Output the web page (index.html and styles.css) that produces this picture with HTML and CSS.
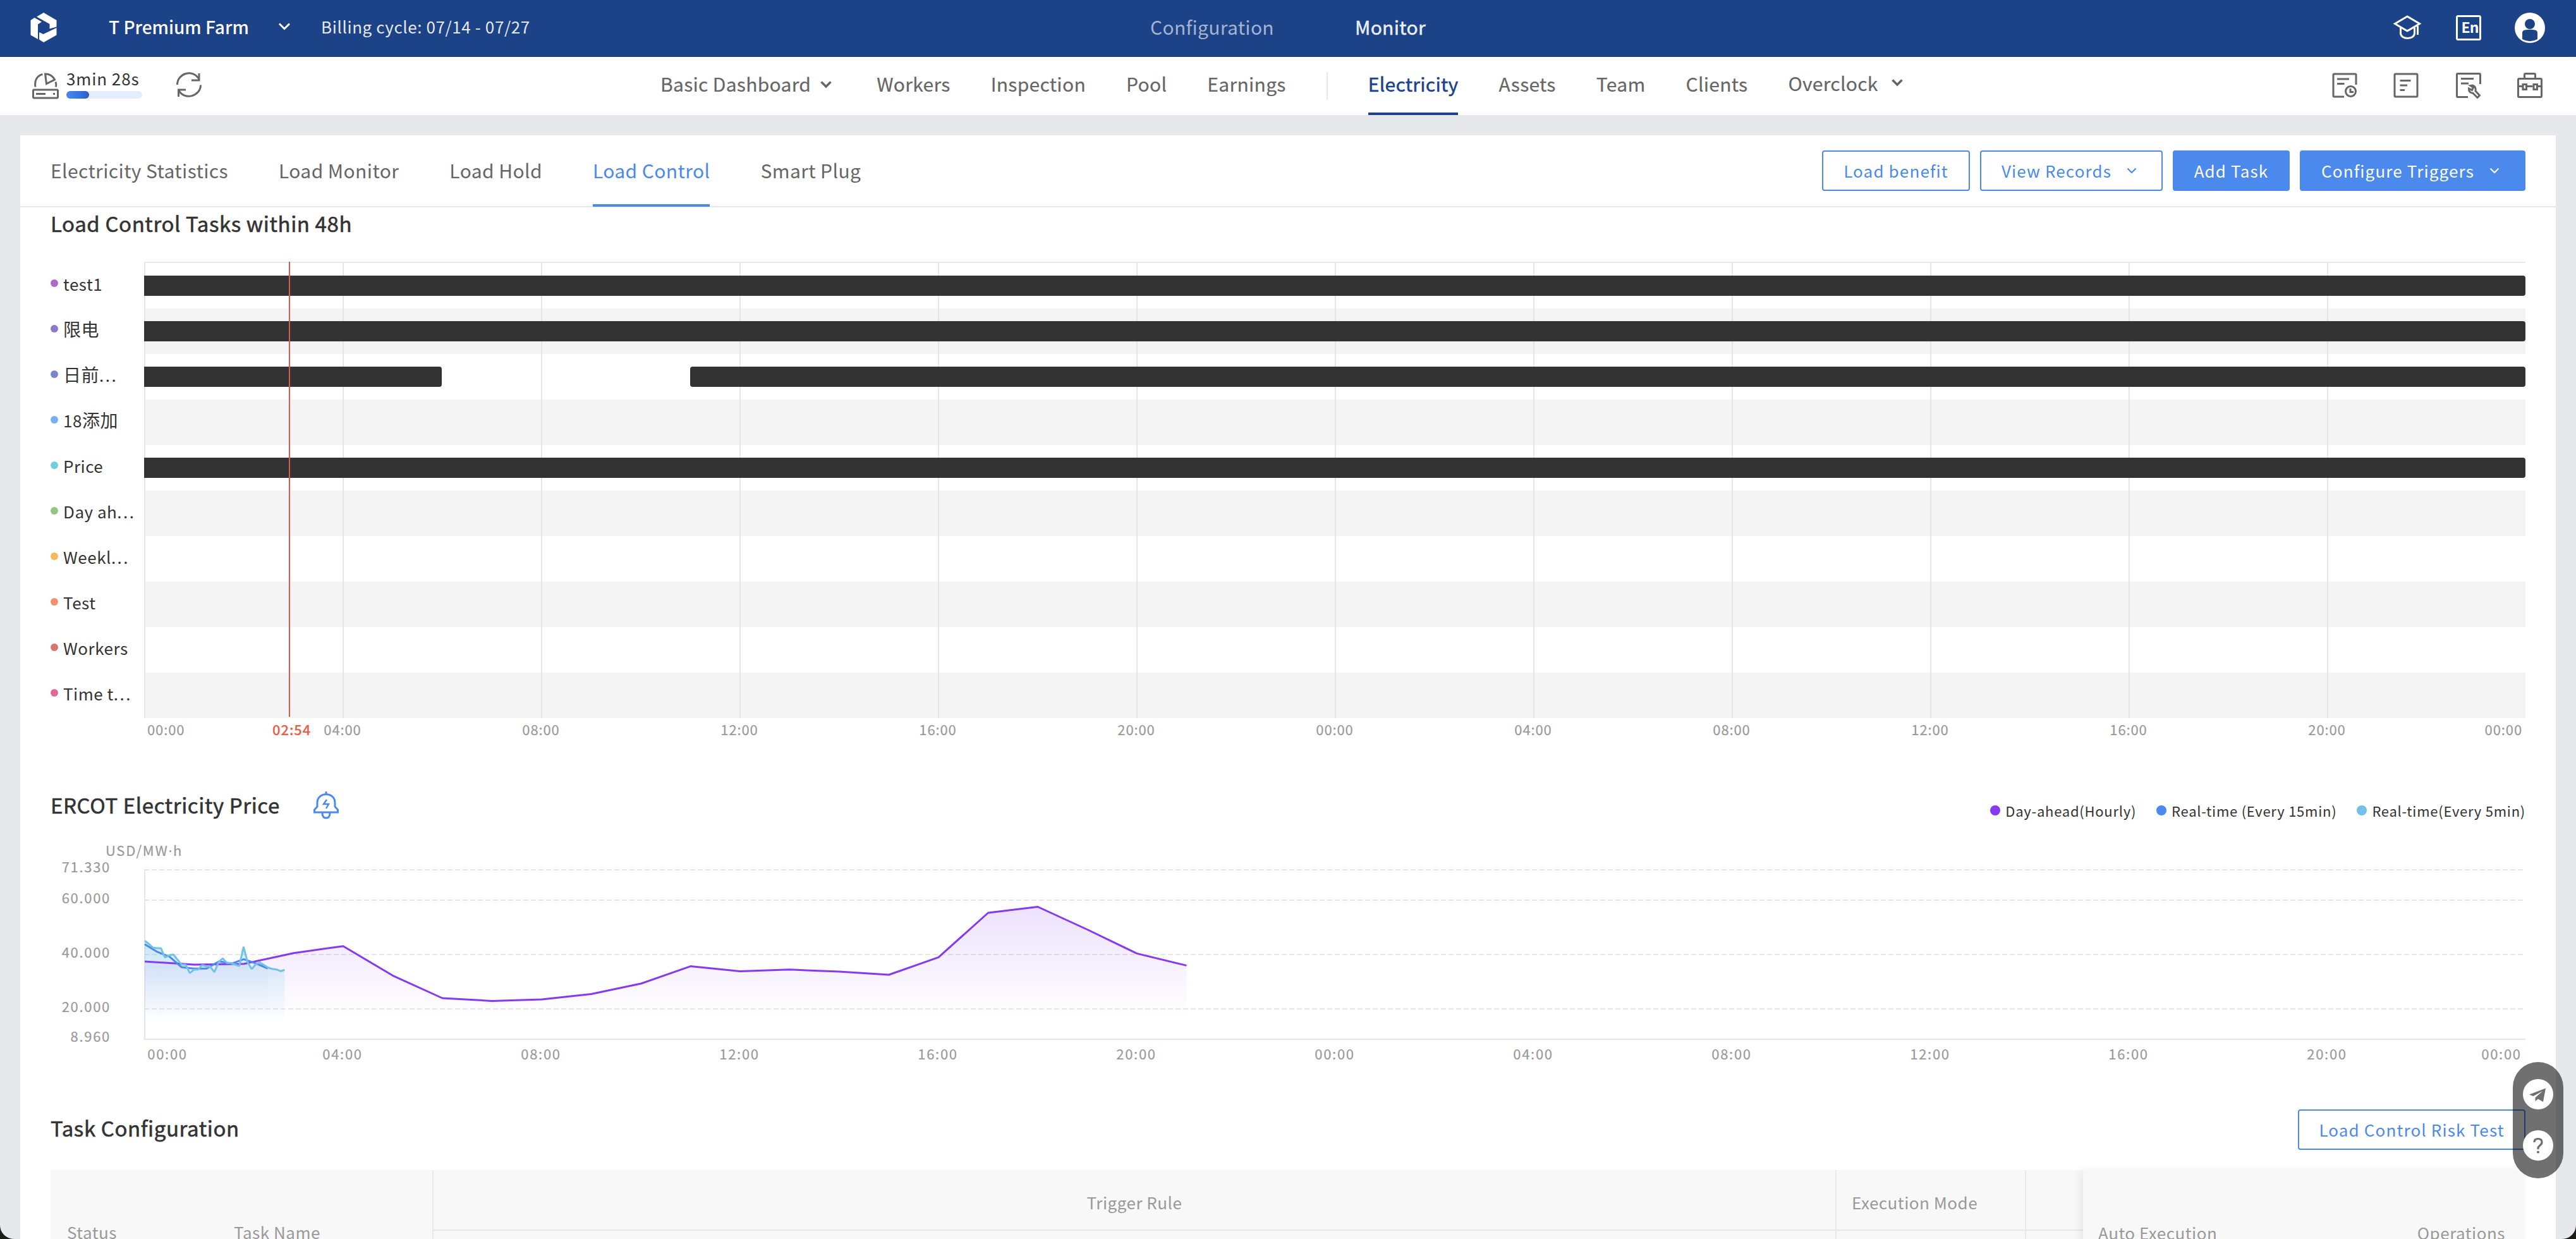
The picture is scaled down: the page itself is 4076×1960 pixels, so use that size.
FILE: index.html
```html
<!DOCTYPE html>
<html lang="en">
<head>
    <meta charset="UTF-8">
    <meta name="viewport" content="width=device-width, initial-scale=1.0">
    <title>Load Control</title>
    <link rel="stylesheet" href="styles.css">
</head>
<body>
<div class="page">
    <header class="topbar">
        <svg class="logo" width="42" height="48" viewBox="0 0 42 48">
            <path fill="#fff" d="M10 6.500 21 0 41.500 12v10.500L30.500 25.500V18zM6.500 8 18 14.500 12 18.500V42L0.500 35.500V12zM41.500 24v11.500L21 47 14 42.500V31l6.500 3z"/>
        </svg>
        <span class="farm">T Premium Farm</span>
        <svg class="farm-arrow" width="20" height="12" viewBox="0 0 20 12"><path d="M2 1.500 10 9.500 18 1.500"/></svg>
        <span class="billing">Billing cycle: 07/14 - 07/27</span>
        <nav class="modes">
            <a>Configuration</a>
            <a class="on">Monitor</a>
        </nav>
        <div class="icons top-icons">
            <svg width="48" height="48" viewBox="0 0 48 48">
                <path d="M4.500 17.500 24 6l19.500 11.500L24 29zM13.500 23.500v9C13.500 43 35.500 43 35.500 32.500v-9M40.500 21v14"/>
            </svg>
            <svg width="48" height="48" viewBox="0 0 48 48">
                <rect x="5.500" y="5.500" width="37" height="37" rx="2"/>
                <text x="12.500" y="32" class="en">En</text>
            </svg>
            <svg width="48" height="48" viewBox="0 0 48 48">
                <circle cx="24" cy="24" r="24" fill="#fff" stroke="none"/>
                <circle cx="24" cy="18" r="8" fill="#1c4287" stroke="none"/>
                <path fill="#1c4287" stroke="none" d="M12 42V32q0-4 4-4.500 8-1.500 16 0 4 .5 4 4.500v10q-12 6.500-24 0z"/>
            </svg>
        </div>
    </header>

    <div class="subbar">
        <div class="status">
            <svg class="server" width="42" height="42" viewBox="0 0 42 42">
                <path d="M5 22.500C3 11 9 4 16.500 2.500M37 14.500q1.500 4 .5 8" stroke-width="3"/>
                <path d="M20.500 2Q31 2 35.500 11L22.500 17.500z" stroke-width="3"/>
                <rect x="1.500" y="27" width="39" height="13" rx="1.500" stroke-width="3"/>
                <path d="M6 33.500h15M33 33.500h3" stroke-width="3"/>
            </svg>
            <div class="timer">
                <span>3min 28s</span>
                <div class="progress"><div class="progress-fill" style="width: 30%"></div></div>
            </div>
            <svg class="refresh" width="42" height="42" viewBox="0 0 42 42">
                <path d="M2.500 20C2.500 2 27-6 37 11.500M37 2v11H25M39.500 20.500C39.500 38 14 46 4.500 28.500M4.500 39V28H16"/>
            </svg>
        </div>
        <nav class="menu">
            <a>Basic Dashboard<svg width="20" height="12" viewBox="0 0 20 12"><path d="M2.500 1.500 10 9 17.500 1.500"/></svg></a>
            <a>Workers</a>
            <a>Inspection</a>
            <a>Pool</a>
            <a>Earnings</a>
            <i class="sep"></i>
            <a class="on">Electricity</a>
            <a>Assets</a>
            <a>Team</a>
            <a>Clients</a>
            <a class="over">Overclock<svg width="20" height="12" viewBox="0 0 20 12"><path d="M2.500 1.500 10 9 17.500 1.500"/></svg></a>
        </nav>
        <div class="icons sub-icons">
            <svg width="48" height="48" viewBox="0 0 48 48">
                <path d="M40 23V7.500q0-1.500-1.500-1.500H5.500Q4 6 4 7.500v33Q4 42 5.500 42H21M10 14h19M10 21.500h11.500"/>
                <circle cx="31.500" cy="33.500" r="8"/>
                <path d="M31 29v5.500h5"/>
            </svg>
            <svg width="48" height="48" viewBox="0 0 48 48">
                <rect x="4" y="6" width="36" height="36" rx="1.500"/>
                <path d="M12.500 16.500h17M12.500 24h11.500M12.500 31.500h7.500"/>
            </svg>
            <svg width="48" height="48" viewBox="0 0 48 48">
                <path d="M42.500 22V7q0-1.500-1.500-1.500H7Q5.500 5.500 5.500 7v34q0 1.500 1.500 1.500h16M12 13.500h20M12 21h12"/>
                <path d="M27 24.500l4.500 3-2 4-5-2.500q-.5 7 6.500 7.500l7 7 3.500-3.500-6.500-7q1.500-7-5-9z"/>
            </svg>
            <svg width="48" height="48" viewBox="0 0 48 48">
                <rect x="5.500" y="13.500" width="37" height="29" rx="1.500"/>
                <path d="M15.500 13V7q0-1.500 1.500-1.500h14q1.500 0 1.500 1.500v6M5.500 25.500H13M19.500 25.500h9M35 25.500h7.500"/>
                <path d="M13 22.500h5.500v8H13zM30 22.500h5.500v8H30z"/>
            </svg>
        </div>
    </div>

    <main class="card">
        <div class="tabbar">
            <div class="tabs">
                <a>Electricity Statistics</a>
                <a>Load Monitor</a>
                <a>Load Hold</a>
                <a class="on">Load Control</a>
                <a>Smart Plug</a>
            </div>
            <div class="actions">
                <button class="btn b-benefit">Load benefit</button>
                <button class="btn b-records">View Records<svg width="16" height="10" viewBox="0 0 16 10"><path d="M1.500 1.500 8 8l6.500-6.500"/></svg></button>
                <button class="btn fill b-add">Add Task</button>
                <button class="btn fill b-config">Configure Triggers<svg width="16" height="10" viewBox="0 0 16 10"><path d="M1.500 1.500 8 8l6.500-6.500"/></svg></button>
            </div>
        </div>

        <h2 class="tasks-title">Load Control Tasks within 48h</h2>
        <div class="gantt">
            <div class="labels">
                <div class="label"><i class="dot c1"></i>test1</div>
                <div class="label"><i class="dot c2"></i><span class="cjk">限电</span></div>
                <div class="label"><i class="dot c3"></i><span class="cjk">日前</span><span class="more">...</span></div>
                <div class="label"><i class="dot c4"></i>18<span class="cjk">添加</span></div>
                <div class="label"><i class="dot c5"></i>Price</div>
                <div class="label"><i class="dot c6"></i>Day ah<span class="more">...</span></div>
                <div class="label"><i class="dot c7"></i>Weekl<span class="more">...</span></div>
                <div class="label"><i class="dot c8"></i>Test</div>
                <div class="label"><i class="dot c9"></i>Workers</div>
                <div class="label"><i class="dot c10"></i>Time t<span class="more">...</span></div>
            </div>
            <div class="plot">
                <div class="row"><div class="bar" style="width: 3768px"></div></div>
                <div class="row"><div class="bar" style="width: 3768px"></div></div>
                <div class="row"><div class="bar" style="width: 471px"></div><div class="bar" style="width: 2904px; margin-left: 393px"></div></div>
                <div class="row"></div>
                <div class="row"><div class="bar" style="width: 3768px"></div></div>
                <div class="row"></div>
                <div class="row"></div>
                <div class="row"></div>
                <div class="row"></div>
                <div class="row"></div>
                <div class="now"></div>
            </div>
            <div class="axis">
                <span>00:00</span><span>04:00</span><span>08:00</span><span>12:00</span><span>16:00</span><span>20:00</span><span>00:00</span><span>04:00</span><span>08:00</span><span>12:00</span><span>16:00</span><span>20:00</span><span>00:00</span>
                <b class="now-time">02:54</b>
            </div>
        </div>

        <div class="price-head">
            <h2>ERCOT Electricity Price</h2>
            <svg class="bell" width="40" height="44" viewBox="0 0 40 44">
                <path d="M20 0v4M6 24V18C6 0 34 0 34 18v6l4.500 5v4h-37v-4zM14 34q0 8 6 8t6-8"/>
                <path d="M21 13l-5 7h8l-4 7" stroke-width="2.500"/>
            </svg>
            <div class="legend">
                <span><i class="hourly"></i>Day-ahead(Hourly)</span>
                <span><i class="min15"></i>Real-time (Every 15min)</span>
                <span><i class="min5"></i>Real-time(Every 5min)</span>
            </div>
        </div>
        <svg class="price" width="3916" height="370" viewBox="0 0 3916 370">
            <defs>
                <linearGradient id="gHour" gradientUnits="userSpaceOnUse" x1="0" y1="74" x2="0" y2="250">
                    <stop offset="0" stop-color="#863aef" stop-opacity=".15"/>
                    <stop offset="1" stop-color="#863aef" stop-opacity="0"/>
                </linearGradient>
                <linearGradient id="g15" gradientUnits="userSpaceOnUse" x1="0" y1="134" x2="0" y2="250">
                    <stop offset="0" stop-color="#4b89ec" stop-opacity=".06"/>
                    <stop offset="1" stop-color="#4b89ec" stop-opacity="0"/>
                </linearGradient>
                <linearGradient id="g5" gradientUnits="userSpaceOnUse" x1="0" y1="128" x2="0" y2="260">
                    <stop offset="0" stop-color="#72c1e6" stop-opacity=".32"/>
                    <stop offset="1" stop-color="#72c1e6" stop-opacity="0"/>
                </linearGradient>
            </defs>
            <text class="unit" x="87" y="24">USD/MW<tspan class="mid">·</tspan>h</text>
            <g class="ylab">
                <text x="95" y="50">71.330</text>
                <text x="95" y="99">60.000</text>
                <text x="95" y="185">40.000</text>
                <text x="95" y="271">20.000</text>
                <text x="95" y="318">8.960</text>
            </g>
            <g transform="translate(148 30)">
                <path class="grid" d="M0 16H3765M0 64H3765M0 150H3765M0 236H3765"/>
                <path class="frame" d="M1 15V284M-1 284H3768"/>
                <path fill="url(#gHour)" d="M1 161 79.500 166 158 164.700 236.500 147.700 315 136.700 393.500 183.300 472 219 550.500 223.400 629 221 707.500 212.500 786 196 864.500 168.600 943 176.500 1021.500 173.800 1100 177 1178.500 182 1257 154.400 1335.500 84 1414 74.500 1492.500 110.500 1571 148.400 1649.500 167.400V284H1z"/>
                <path fill="url(#g15)" d="M1 133.700 20.700 145.700 40.300 153.300 59.300 170 78.700 172.300 98.700 172.300 118.700 160.700 138.300 164.300 157.700 157.300 177 164 195.700 172V284H1z"/>
                <path fill="url(#g5)" d="M1 128.300 14 139 26.700 140 33 154.700 46.300 150 59.300 165.700 66 166.300 72.300 179.300 78.700 174 85.300 173.700 92 166.700 104.700 169.300 111.300 177.700 118 161.700 124.300 156 131 163.300 137.700 163.300 150.700 168 157.300 137.700 163.700 162 170.300 173 176.700 165.300 183.300 162.700 196.300 170.700 216 176.300 222.300 174.300V284H1z"/>
                <polyline stroke="#863aef" points="1,161 79.5,166 158,164.7 236.5,147.7 315,136.7 393.5,183.3 472,219 550.5,223.4 629,221 707.5,212.5 786,196 864.5,168.6 943,176.5 1021.5,173.8 1100,177 1178.5,182 1257,154.4 1335.5,84 1414,74.5 1492.5,110.5 1571,148.4 1649.5,167.4"/>
                <polyline stroke="#4b89ec" points="1,133.7 20.7,145.7 40.3,153.3 59.3,170 78.7,172.3 98.7,172.3 118.7,160.7 138.3,164.3 157.7,157.3 177,164 195.7,172"/>
                <polyline stroke="#72c1e6" points="1,128.3 7.7,133.3 14,139 20.7,140 26.7,140 33,154.7 40.3,151 46.3,150 53,158.3 59.3,165.7 66,166.3 72.3,179.3 78.7,174 85.3,173.7 92,166.7 98.7,168.7 104.7,169.3 111.3,177.7 118,161.7 124.3,156 131,163.3 137.7,163.3 144.3,166 150.7,168 157.3,137.7 163.7,162 170.3,173 176.7,165.3 183.3,162.7 190,166.7 196.3,170.7 203,172.7 210,173.7 216,176.3 222.3,174.3"/>
            </g>
            <g class="xlab">
                <text x="185" y="346">00:00</text>
                <text x="462" y="346">04:00</text>
                <text x="776" y="346">08:00</text>
                <text x="1090" y="346">12:00</text>
                <text x="1404" y="346">16:00</text>
                <text x="1718" y="346">20:00</text>
                <text x="2032" y="346">00:00</text>
                <text x="2346" y="346">04:00</text>
                <text x="2660" y="346">08:00</text>
                <text x="2974" y="346">12:00</text>
                <text x="3288" y="346">16:00</text>
                <text x="3602" y="346">20:00</text>
                <text x="3878" y="346">00:00</text>
            </g>
        </svg>

        <div class="config-head">
            <h2>Task Configuration</h2>
            <button class="btn b-risk">Load Control Risk Test</button>
        </div>
        <div class="table">
            <div class="th tall status-col">Status</div>
            <div class="th tall name-col">Task Name</div>
            <div class="group rule-col"><div class="th center">Trigger Rule</div></div>
            <div class="group"><div class="th exec">Execution Mode</div></div>
            <div class="group"><div class="th"></div></div>
            <div class="fixed"><span>Auto Execution</span><span>Operations</span></div>
        </div>
    </main>

    <div class="float">
        <div class="round">
            <svg width="48" height="48" viewBox="0 0 48 48"><path fill="#6f6f6f" d="M36 14.500 10 24.500l6.500 2.500L31 19 19.500 29.500V35l4.500-3.500 8 4.500z"/></svg>
        </div>
        <div class="round">
            <svg width="48" height="48" viewBox="0 0 48 48"><path fill="none" stroke="#6f6f6f" stroke-width="3.200" d="M18 19q0-5.500 6-5.500t6 5.500c0 5-6 5-6 9.500v1.500"/><circle cx="24" cy="34.500" r="2" fill="#6f6f6f"/></svg>
        </div>
    </div>
</div>
</body>
</html>
```
FILE: styles.css
```css
* {
    box-sizing: border-box;
}
body {
    margin: 0;
    background: #1c1e16;
    color: #333;
    font-family: "Noto Sans CJK SC", "Noto Sans", sans-serif;
    font-size: 26px;
}
.page {
    position: relative;
    width: 4076px;
    height: 1960px;
    overflow: hidden;
    background: #e7e8ec;
    border-radius: 0 0 22px 22px;
}
h2 {
    margin: 0;
    font-size: 33px;
    font-weight: 400;
    line-height: 51px;
    letter-spacing: 0.600px;
    -webkit-text-stroke: 0.6px;
    white-space: nowrap;
}
svg {
    flex: none;
    display: block;
}

/* top bar */
.topbar {
    display: flex;
    align-items: center;
    height: 90px;
    padding: 0 49px 6px 48px;
    background: #1c4287;
    border-bottom: 1px solid #153a80;
    color: #fff;
    white-space: nowrap;
}
.logo {
    margin: 5px 82px 0 0;
}
.farm {
    width: 268px;
    font-size: 28px;
    font-weight: 500;
    letter-spacing: 0;
}
.farm-arrow {
    margin-right: 48px;
    fill: none;
    stroke: #fff;
    stroke-width: 3;
}
.billing {
    width: 1312px;
    color: #e8e8e8;
    letter-spacing: 0.600px;
}
.modes {
    display: flex;
    flex: 1;
    gap: 128px;
    font-size: 30px;
    letter-spacing: 0.300px;
    color: #a4b3cf;
}
.modes .on {
    color: #e8eef8;
    -webkit-text-stroke: 0.5px;
}
.icons {
    display: flex;
    gap: 49px;
    fill: none;
    stroke-width: 3;
}
.top-icons {
    margin-top: 5px;
    stroke: #fff;
}
.en {
    fill: #fff;
    stroke: none;
    font-size: 23px;
    font-weight: 700;
    letter-spacing: -1px;
}

/* second bar */
.subbar {
    display: flex;
    height: 92px;
    padding: 0 49px 0 51px;
    background: #fff;
    color: #666;
    white-space: nowrap;
}
.status {
    display: flex;
    width: 994px;
    padding-top: 25px;
    fill: none;
    stroke: #666;
}
.timer {
    width: 120px;
    margin: -9px 53px 0 12px;
    color: #333;
    letter-spacing: 0.900px;
    line-height: 36px;
}
.progress {
    height: 12px;
    margin-top: 2px;
    border-radius: 6px;
    background: #e3edfd;
}
.progress-fill {
    height: 12px;
    border-radius: 6px;
    background: linear-gradient(to right, #4b89ec, #3672e2 60%, #2e5cc0);
}
.refresh {
    margin-top: -1px;
    stroke-width: 3;
}
.menu {
    display: flex;
    flex: 1;
    gap: 64px;
    font-size: 30px;
    letter-spacing: 0.300px;
    line-height: 84px;
    -webkit-text-stroke: 0.2px;
}
.menu a {
    display: flex;
    align-items: center;
    height: 92px;
    padding-bottom: 8px;
}
.menu a svg {
    margin: 3px 6px 0 14px;
    fill: none;
    stroke: #666;
    stroke-width: 3.500;
}
.menu .over {
    padding-bottom: 10px;
}
.menu .over svg {
    margin: 0 0 0 20px;
}
.menu .on {
    color: #1c4287;
    -webkit-text-stroke: 0.5px;
    padding-bottom: 4px;
    border-bottom: 4px solid #1c4287;
}
.sep {
    width: 2px;
    height: 44px;
    margin-top: 24px;
    background: #e8e8e8;
}
.sub-icons {
    padding-top: 21px;
    stroke: #666;
}

/* main card */
.card {
    margin: 32px 32px 0;
    height: 1746px;
    padding: 0 48px;
    background: #fff;
}
.tabbar {
    display: flex;
    justify-content: space-between;
    height: 114px;
    margin: 0 -48px;
    padding: 0 48px;
    border-bottom: 2px solid #e8e8e8;
}
.tabs {
    display: flex;
    gap: 80px;
    font-size: 30px;
    letter-spacing: 0.400px;
    line-height: 110px;
    color: #666;
}
.tabs a {
    height: 113px;
}
.tabs .on {
    color: #4b89ec;
    border-bottom: 4px solid #4b89ec;
}
.actions {
    display: flex;
    gap: 16px;
    padding-top: 24px;
}
.btn {
    display: flex;
    align-items: center;
    justify-content: center;
    height: 64px;
    padding: 0 0 2px;
    border: 2px solid #4b89ec;
    border-radius: 4px;
    background: #fff;
    color: #4b89ec;
    font-family: inherit;
    font-size: 26px;
    letter-spacing: 1.150px;
    white-space: nowrap;
}
.btn svg {
    margin: 2px 7px 0 24px;
    fill: none;
    stroke: currentColor;
    stroke-width: 2.200;
}
.fill {
    background: #4b89ec;
    color: #fff;
}
.b-benefit {
    width: 234px;
}
.b-records {
    width: 289px;
}
.b-add {
    width: 185px;
}
.b-config {
    width: 357px;
}
.b-risk {
    width: 360px;
}

/* task timeline */
.gantt {
    display: grid;
    grid-template-columns: 148px 3768px;
    margin-top: 35px;
}
.labels {
    padding-top: 2px;
}
.label {
    display: flex;
    align-items: center;
    height: 72px;
    padding-bottom: 8px;
    letter-spacing: 0.500px;
    white-space: nowrap;
}
.cjk {
    font-size: 28px;
}
.more {
    letter-spacing: 2.500px;
}
.dot {
    width: 12px;
    height: 12px;
    margin-right: 8px;
    border-radius: 50%;
}
.c1 { background: #b06ac8; }
.c2 { background: #8d78cc; }
.c3 { background: #7a86c9; }
.c4 { background: #76b0f2; }
.c5 { background: #74cddd; }
.c6 { background: #92c586; }
.c7 { background: #f4b95c; }
.c8 { background: #f2906c; }
.c9 { background: #d87572; }
.c10 { background: #e06a94; }
.plot {
    position: relative;
    border-top: 2px solid #e8e8e8;
}
.row {
    display: flex;
    height: 72px;
    padding-top: 20px;
    background: repeating-linear-gradient(to right, #e5e5e5 0 2px, transparent 2px 314px) #fff;
}
.row:nth-child(even) {
    background-color: #f4f4f4;
}
.bar {
    height: 32px;
    border-radius: 0 4px 4px 0;
    background: #333;
}
.bar + .bar {
    border-radius: 4px;
}
.now {
    position: absolute;
    left: 229px;
    top: -2px;
    width: 2px;
    height: 720px;
    background: #dd5a4a;
}
.axis {
    position: relative;
    grid-column: 2;
    display: flex;
    height: 35px;
    font-size: 22px;
    letter-spacing: 0.900px;
    line-height: 35px;
    color: #999;
    -webkit-text-stroke: 0.2px;
}
.axis span {
    width: 314px;
    text-align: center;
}
.axis span:first-child {
    width: 157px;
    padding-left: 5px;
    text-align: left;
}
.axis span:nth-child(13) {
    width: 157px;
    padding-right: 5px;
    text-align: right;
}
.now-time {
    position: absolute;
    left: 203px;
    color: #e8604c;
    font-weight: 500;
}

/* price chart */
.price-head {
    display: flex;
    height: 64px;
    margin-top: 77px;
}
.price-head h2 {
    width: 365px;
}
.bell {
    margin: 4px 0 0 51px;
    fill: none;
    stroke: #4b89ec;
    stroke-width: 3;
}
.legend {
    display: flex;
    gap: 32px;
    margin-left: auto;
    padding-top: 4px;
    font-size: 22px;
    letter-spacing: 0.750px;
    line-height: 64px;
}
.legend span {
    display: flex;
    align-items: center;
}
.legend i {
    width: 16px;
    height: 16px;
    margin-right: 8px;
    border-radius: 50%;
}
.hourly { background: #863aef; }
.min15 { background: #4b89ec; }
.min5 { background: #72c1e6; }
.price {
    margin-top: 18px;
    font-size: 22px;
    letter-spacing: 1.700px;
}
.price text {
    fill: #999;
    stroke: #999;
    stroke-width: 0.2px;
}
.mid {
    font-family: "Noto Sans", sans-serif;
}
.ylab {
    text-anchor: end;
}
.xlab {
    text-anchor: middle;
}
.grid {
    stroke: #e6e6e6;
    stroke-width: 2;
    stroke-dasharray: 8 4;
}
.frame {
    fill: none;
    stroke: #e6e6e6;
    stroke-width: 2;
}
.price polyline {
    fill: none;
    stroke-width: 3;
    stroke-linejoin: bevel;
}

/* task table */
.config-head {
    display: flex;
    justify-content: space-between;
    height: 64px;
    margin-top: 55px;
}
.config-head h2 {
    line-height: 59px;
}
.table {
    display: grid;
    grid-template-columns: 264px 340px 2220px 300px 92px 700px;
    height: 194px;
    margin-top: 32px;
    background: #f8f8f8;
    color: #999;
    letter-spacing: 0.500px;
}
.th {
    height: 96px;
    padding-top: 6px;
    line-height: 89px;
    border-bottom: 2px solid #e8e8e8;
}
.tall {
    height: 194px;
    padding-top: 0;
    line-height: 195px;
    border-bottom: none;
}
.status-col {
    padding-left: 26px;
}
.name-col {
    padding-left: 26px;
}
.group {
    border-left: 2px solid #e8e8e8;
}
.center {
    text-align: center;
}
.exec {
    padding-left: 24px;
}
.fixed {
    display: flex;
    justify-content: space-between;
    padding: 0 32px 0 24px;
    line-height: 197px;
    background: #f8f8f8;
    box-shadow: -6px 0 12px rgba(0, 0, 0, 0.06);
}

/* floating help */
.float {
    position: absolute;
    right: 20px;
    top: 1680px;
    display: flex;
    flex-direction: column;
    align-items: center;
    gap: 33px;
    width: 80px;
    height: 184px;
    padding-top: 27px;
    border-radius: 40px;
    background: rgba(0, 0, 0, 0.56);
}
.round {
    width: 48px;
    height: 48px;
    border-radius: 50%;
    background: #fff;
}
```
